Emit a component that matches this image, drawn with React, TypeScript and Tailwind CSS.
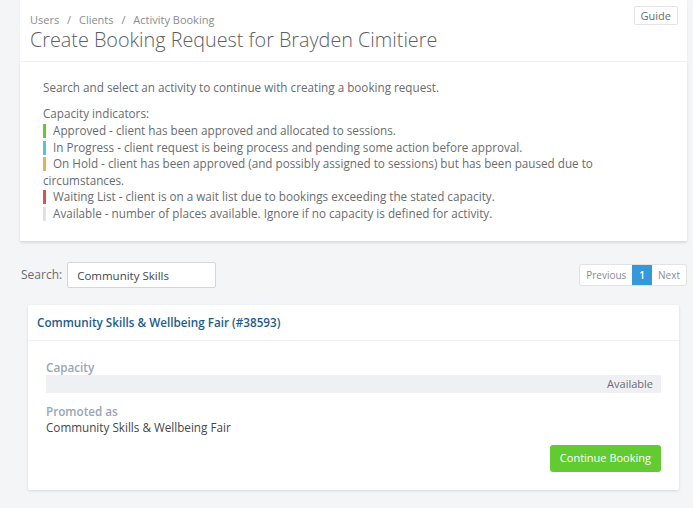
import { useState } from 'react'

const indicators = [
  { color: 'bg-[#62cb31]', text: 'Approved - client has been approved and allocated to sessions.' },
  { color: 'bg-[#5bc0de]', text: 'In Progress - client request is being process and pending some action before approval.' },
  {
    color: 'bg-[#f0ad4e]',
    text: 'On Hold - client has been approved (and possibly assigned to sessions) but has been paused due to circumstances.',
  },
  { color: 'bg-[#d9534f]', text: 'Waiting List - client is on a wait list due to bookings exceeding the stated capacity.' },
  { color: 'bg-[#dfe1e6]', text: 'Available - number of places available. Ignore if no capacity is defined for activity.' },
]

export default function App() {
  const [search, setSearch] = useState('Community Skills')

  return (
    <div className="min-h-[508px] bg-[#f4f5f7] pl-[20px] pr-[6px] font-['Open_Sans',sans-serif] text-[#6a6c6f]">
      {/* page header */}
      <div className="bg-white shadow-[0_1px_2px_rgba(0,0,0,0.06)]">
        <div className="flex justify-between border-b border-[#f1f1f1] pl-[10px] pr-[9px] pb-[8px] pt-[12px]">
          <div>
            <div className="text-[11px] leading-[15px] text-[#8a8c90]">
              Users <span className="mx-[5px]">/</span> Clients <span className="mx-[5px]">/</span> Activity Booking
            </div>
            <h1 className="text-[19.8px] font-light leading-[26px] text-[#5c6066]">
              Create Booking Request for Brayden Cimitiere
            </h1>
          </div>
          <button className="h-[19px] self-start rounded-[2px] border border-[#e4e5e7] bg-white px-[6px] text-[11px] leading-[16px] text-[#6a6c6f] -mt-[6px]">
            Guide
          </button>
        </div>
        <div className="px-[23px] pb-[20px] pt-[17px] text-[11.7px] leading-[16.5px] text-[#6a6c6f] shadow-[0_2px_3px_rgba(0,0,0,0.08)]">
          <p className="mb-[9px]">Search and select an activity to continue with creating a booking request.</p>
          <p>Capacity indicators:</p>
          <div className="mt-[1px]">
            {indicators.map((i) => (
              <div key={i.text} className="relative">
                <span className={`absolute left-0 top-[2px] h-[14px] w-[3px] ${i.color}`} />
                <span className="pl-[10px]">{i.text}</span>
              </div>
            ))}
          </div>
        </div>
      </div>

      {/* search + pagination */}
      <div className="mt-[21px] flex items-center justify-between pl-[1px]">
        <label className="flex items-center gap-[5px] text-[12px] text-[#6a6c6f]">
          Search:
          <input
            value={search}
            onChange={(e) => setSearch(e.target.value)}
            className="h-[26px] w-[149px] rounded-[2px] border border-[#d5d6d8] bg-white px-[9px] text-[11.5px] text-[#44474b] outline-none"
          />
        </label>
        <div className="flex h-[22px] overflow-hidden rounded-[3px] border border-[#e1e2e4] bg-white text-[10px]">
          <button className="px-[6px] text-[#8a8c90]">Previous</button>
          <button className="bg-[#3498db] px-[7px] font-semibold text-white">1</button>
          <button className="px-[6px] text-[#8a8c90]">Next</button>
        </div>
      </div>

      {/* activity card */}
      <div className="ml-[8px] mr-[8px] mt-[17px] rounded-[2px] bg-white shadow-[0_1px_3px_rgba(0,0,0,0.12)]">
        <div className="border-b border-[#eff0f2] px-[9px] py-[10px] text-[11.7px] font-semibold leading-[15px] text-[#1d5d8c]">
          Community Skills &amp; Wellbeing Fair (#38593)
        </div>
        <div className="px-[18px] pb-[18px] pt-[19px] text-[11.7px]">
          <div className="font-semibold leading-[15px] text-[#98a6b6]">Capacity</div>
          <div className="flex h-[18px] items-center justify-end bg-[#eff0f3] pr-[8px] text-[11px] text-[#6a6c6f]">
            Available
          </div>
          <div className="mt-[11px] font-semibold leading-[15px] text-[#98a6b6]">Promoted as</div>
          <div className="leading-[17px] text-[#44474b]">Community Skills &amp; Wellbeing Fair</div>
          <div className="mt-[9px] flex justify-end">
            <button className="h-[27px] rounded-[3px] bg-[#62cb31] px-[10px] text-[11px] text-white">
              Continue Booking
            </button>
          </div>
        </div>
      </div>
    </div>
  )
}
